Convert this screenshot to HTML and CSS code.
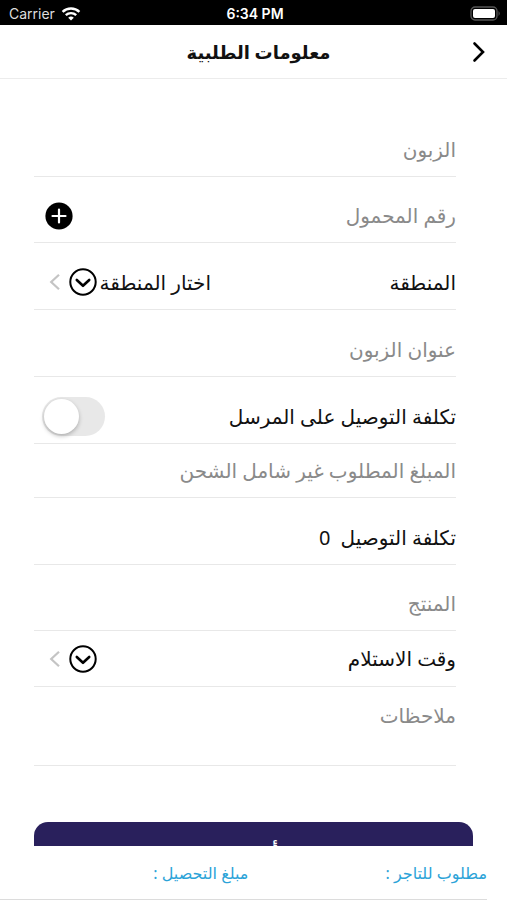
FILE: index.html
```html
<!DOCTYPE html>
<html lang="ar" dir="rtl">

<head>
  <meta charset="UTF-8">
  <meta name="viewport" content="width=device-width, initial-scale=1.0">
  <title>معلومات الطلبية</title>
  <link rel="stylesheet" href="styles.css">
</head>

<body>
  <div class="status-bar" dir="ltr">
    <div class="carrier">
      <span>Carrier</span>
      <svg width="20" height="14" viewBox="0 0 20 14">
        <path d="M1.6 4.9 A12 12 0 0 1 18.4 4.9" fill="none" stroke="#fff" stroke-width="2.4" />
        <path d="M4.8 8.2 A7.5 7.5 0 0 1 15.2 8.2" fill="none" stroke="#fff" stroke-width="2.4" />
        <path d="M10 13.6 L7.2 10.8 A4 4 0 0 1 12.8 10.8 Z" fill="#fff" />
      </svg>
    </div>
    <div class="clock">6:34 PM</div>
    <div class="battery">
      <svg width="31" height="15" viewBox="0 0 31 15">
        <rect x="1" y="1" width="26" height="13" rx="4" fill="#000" stroke="#555" stroke-width="1.3" />
        <rect x="3" y="3" width="22" height="9" rx="2" fill="#fff" />
        <path d="M28.6 5 Q30.6 7.5 28.6 10 Z" fill="#666" />
      </svg>
    </div>
  </div>

  <header class="nav">
    <button type="button" class="icon-button" aria-label="رجوع">
      <svg width="16" height="22" viewBox="0 0 16 22">
        <path d="M3.5 2.5 L12 11 L3.5 19.5" fill="none" stroke="#000" stroke-width="2.6" stroke-linecap="round" />
      </svg>
    </button>
    <h1>معلومات الطلبية</h1>
  </header>

  <main>
    <form id="orderForm">
      <div class="row">
        <input type="text" placeholder="الزبون" aria-label="الزبون">
      </div>
      <div class="row">
        <input type="tel" dir="rtl" placeholder="رقم المحمول" aria-label="رقم المحمول">
        <button type="button" class="icon-button add-phone" aria-label="إضافة رقم">
          <svg width="28" height="28" viewBox="0 0 28 28">
            <circle cx="14" cy="14" r="13.6" fill="#000" />
            <path d="M14 7.5 V20.5 M7.5 14 H20.5" stroke="#fff" stroke-width="2.2" stroke-linecap="round" />
          </svg>
        </button>
      </div>
      <div class="row tall">
        <label for="region">المنطقة</label>
        <div class="picker">
          <select id="region">
            <option>اختار المنطقة</option>
          </select>
          <svg width="28" height="28" viewBox="0 0 28 28">
            <circle cx="14" cy="14" r="12.7" fill="none" stroke="#000" stroke-width="2" />
            <path d="M7.8 12 L14 17.8 L20.2 12" fill="none" stroke="#000" stroke-width="2.6" stroke-linecap="round" stroke-linejoin="round" />
          </svg>
          <svg width="12" height="18" viewBox="0 0 12 18">
            <path d="M10 1.8 L2.2 9 L10 16.2" fill="none" stroke="#c4c4c4" stroke-width="2.2" />
          </svg>
        </div>
      </div>
      <div class="row tall">
        <input type="text" placeholder="عنوان الزبون" aria-label="عنوان الزبون">
      </div>
      <div class="row tall">
        <label for="senderPays">تكلفة التوصيل على المرسل</label>
        <input type="checkbox" id="senderPays" class="switch">
      </div>
      <div class="row short">
        <input type="text" placeholder="المبلغ المطلوب غير شامل الشحن" aria-label="المبلغ المطلوب غير شامل الشحن">
      </div>
      <div class="row tall cost">
        <span>تكلفة التوصيل</span>
        <output>0</output>
      </div>
      <div class="row">
        <input type="text" placeholder="المنتج" aria-label="المنتج">
      </div>
      <div class="row short time">
        <label for="pickupTime">وقت الاستلام</label>
        <div class="picker">
          <select id="pickupTime">
            <option></option>
          </select>
          <svg width="28" height="28" viewBox="0 0 28 28">
            <circle cx="14" cy="14" r="12.7" fill="none" stroke="#000" stroke-width="2" />
            <path d="M7.8 12 L14 17.8 L20.2 12" fill="none" stroke="#000" stroke-width="2.6" stroke-linecap="round" stroke-linejoin="round" />
          </svg>
          <svg width="12" height="18" viewBox="0 0 12 18">
            <path d="M10 1.8 L2.2 9 L10 16.2" fill="none" stroke="#c4c4c4" stroke-width="2.2" />
          </svg>
        </div>
      </div>
      <div class="row notes">
        <textarea placeholder="ملاحظات" aria-label="ملاحظات"></textarea>
      </div>
      <button type="submit" class="submit">أضف</button>
    </form>
  </main>

  <footer class="totals">
    <div>مطلوب للتاجر :</div>
    <div>مبلغ التحصيل :</div>
  </footer>
</body>

</html>
```
FILE: styles.css
```css
* {
  box-sizing: border-box;
}

body {
  margin: 0;
  height: 100vh;
  display: flex;
  flex-direction: column;
  background: #fff;
  color: #111;
  font-family: 'Noto Sans', 'DejaVu Sans', sans-serif;
  font-size: 20px;
}

svg {
  display: block;
  flex: none;
}

/* Status bar */
.status-bar {
  flex: none;
  display: grid;
  grid-template-columns: 1fr auto 1fr;
  align-items: center;
  height: 25px;
  padding: 2px 6px 0 9px;
  background: #000;
  color: #fff;
  font-family: Inter, sans-serif;
  font-size: 14px;
}

.carrier {
  display: flex;
  align-items: center;
  gap: 6px;
  color: #ddd;
}

.clock {
  font-weight: 600;
}

.battery {
  justify-self: end;
}

/* Title */
.nav {
  flex: none;
  display: grid;
  grid-template-columns: 40px 1fr 50px;
  align-items: center;
  height: 54px;
  padding: 0 8px;
  border-bottom: 1px solid #ececec;
}

.nav h1 {
  margin: 0;
  text-align: center;
  font-size: 18px;
  font-weight: 700;
}

.icon-button {
  display: flex;
  justify-content: center;
  align-items: center;
  padding: 0;
  border: none;
  background: none;
  cursor: pointer;
}

/* Form */
main {
  flex: 1;
  min-height: 0;
  overflow-y: auto;
  scrollbar-width: none;
}

form {
  padding: 32px 34px 24px;
}

.row {
  display: flex;
  justify-content: space-between;
  align-items: center;
  height: 66px;
  margin-right: 17px;
  padding-top: 12px;
  border-bottom: 1px solid #e8e8e8;
}

.row.tall {
  height: 67px;
}

.row.short {
  height: 54px;
  padding-top: 0;
}

.row.time {
  height: 56px;
}

.row.cost {
  justify-content: flex-start;
  gap: 10px;
}

input[type="text"],
input[type="tel"],
textarea {
  flex: 1;
  min-width: 0;
  padding: 0;
  border: none;
  outline: none;
  background: none;
  color: #111;
  font: inherit;
}

::placeholder {
  color: #8a8a8a;
  opacity: 1;
}

.add-phone {
  margin-left: 11px;
}

.picker {
  display: flex;
  align-items: center;
  margin-left: 15px;
}

.picker svg + svg {
  margin-right: 8px;
}

select {
  appearance: none;
  margin: 0 0 0 2px;
  padding: 0;
  border: none;
  background: none;
  color: #111;
  font: inherit;
}

.switch {
  appearance: none;
  display: flex;
  justify-content: flex-end;
  width: 63px;
  height: 39px;
  margin: 0 0 0 8px;
  border-radius: 20px;
  background: #e8e8e8;
  cursor: pointer;
}

.switch::before {
  content: '';
  width: 35px;
  height: 35px;
  margin: 2px;
  border-radius: 50%;
  background: #fff;
  box-shadow: 0 2px 4px rgba(0, 0, 0, 0.25);
}

.switch:checked {
  justify-content: flex-start;
  background: #34c759;
}

.row.notes {
  height: 79px;
}

textarea {
  height: 60px;
  resize: none;
}

.submit {
  display: block;
  width: 100%;
  height: 60px;
  margin-top: 56px;
  border: none;
  border-radius: 14px;
  background: #29205c;
  color: #fff;
  font: inherit;
  font-weight: 700;
  cursor: pointer;
}

/* Totals */
.totals {
  flex: none;
  display: grid;
  grid-template-columns: 49% 51%;
  align-items: center;
  height: 54px;
  margin-right: 20px;
  border-bottom: 1px solid #dcdcdc;
  color: #2ba3d8;
  font-size: 16px;
}
```
